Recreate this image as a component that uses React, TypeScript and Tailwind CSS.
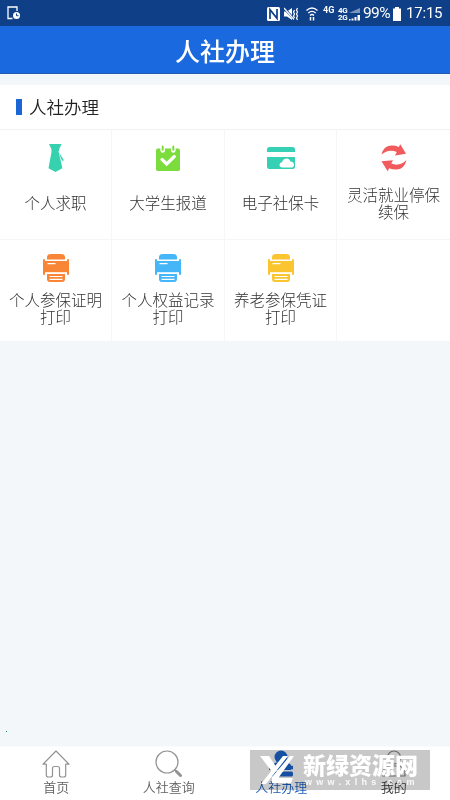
import type { ReactNode } from 'react';

function TieIcon() {
  return (
    <svg className="h-7 w-7" viewBox="0 0 28 28" fill="#36d1af">
      <path d="M7 0h12.500l-2.500 5.500.4 1.500H9.200l.4-1.500z" />
      <path d="M9.700 6.800h6.700l4 17.500-6.900 3.700-7-3.700z" />
      <path d="M17 8.600l4.600 7.200-.5 1.600-2-2.400z" />
    </svg>
  );
}

function CalendarIcon() {
  return (
    <svg className="h-7 w-7" viewBox="0 0 28 28">
      <rect x="2" y="4.6" width="24" height="22.4" rx="1.8" fill="#7bdc3c" />
      <path d="M8.7 3v3.500M19.3 3v3.500" stroke="#fff" strokeWidth="4.6" strokeLinecap="round" />
      <path d="M8.7 2.500v3.200M19.3 2.500v3.200" stroke="#7bdc3c" strokeWidth="2" strokeLinecap="round" />
      <path d="M8 15.500l4.700 4.500 7.600-7.500" fill="none" stroke="#fff" strokeWidth="3.2" strokeLinecap="round" />
    </svg>
  );
}

function CardIcon() {
  return (
    <svg className="h-7 w-7" viewBox="0 0 28 28">
      <path d="M2.500 3h23Q28 3 28 5.500V8H0V5.500Q0 3 2.500 3z" fill="#36d1b5" />
      <path d="M0 13h28v9.200Q28 25 25.500 25h-23Q0 25 0 22.200z" fill="#36d1b5" />
      <path d="M15.500 23.500q-3-.3-3-2.600 0-2.400 2.600-2.600.7-3.300 4-3.800 3.300-.2 4.300 3 3.600.4 3.600 3.200 0 2.800-3 2.800z" fill="#fff" />
    </svg>
  );
}

function RefreshIcon() {
  return (
    <svg className="h-7 w-7" viewBox="0 0 28 28" fill="#f15b5b">
      <path d="M1.500 10.500Q3.500 2.200 11 1.600q4.300-.2 7.800 1.400L20.300.2 26 9.800l-11 1.700 1.800-3.500Q8.500 4.500 1.500 10.500z" />
      <path d="M26.500 16q-2 8.800-9.500 9.600-4.300.2-7.800-1.400l-1.500 3.100L1.500 17.300l11.500-1-1.800 3.200q8.300 3.500 15.300-3.500z" />
    </svg>
  );
}

function PrinterIcon({ color }: { color: string }) {
  return (
    <svg className="h-7 w-7" viewBox="0 0 28 28">
      <path d="M5 5.400V3.500Q5 0 8.500 0h11Q23 0 23 3.500v1.900z" fill={color} />
      <rect x="1" y="5" width="2" height="16" rx="1" fill={color} />
      <rect x="25" y="5" width="2" height="16" rx="1" fill={color} />
      <path d="M1 7h26v11.200H1z" fill={color} />
      <path d="M5 19.900h18V25q0 3-3 3H8q-3 0-3-3z" fill={color} />
      <path d="M5.500 9.600h8M7.500 22.500h13M7.500 25.400h13" stroke="#fff" strokeWidth="1.200" />
    </svg>
  );
}

const services: { label: string[]; icon: ReactNode }[] = [
  { label: ['个人求职'], icon: <TieIcon /> },
  { label: ['大学生报道'], icon: <CalendarIcon /> },
  { label: ['电子社保卡'], icon: <CardIcon /> },
  { label: ['灵活就业停保', '续保'], icon: <RefreshIcon /> },
  { label: ['个人参保证明', '打印'], icon: <PrinterIcon color="#f98636" /> },
  { label: ['个人权益记录', '打印'], icon: <PrinterIcon color="#45b6f7" /> },
  { label: ['养老参保凭证', '打印'], icon: <PrinterIcon color="#fac52e" /> },
];

function StatusBar() {
  return (
    <div className="flex h-[26px] items-center bg-[#0f3f87] pr-[8px] pl-[7px] font-['Roboto'] text-white">
      <svg className="h-[14px] w-[14px]" viewBox="0 0 14 14" fill="none" stroke="#fff" strokeWidth="1.300">
        <path d="M5.500 12.500H1V1h9v4" />
        <circle cx="9.500" cy="9.500" r="3.500" fill="#fff" stroke="none" />
        <path d="M9.500 7.500v2.200h2" stroke="#0f3f87" strokeWidth="1" />
      </svg>
      <div className="ml-auto flex items-center pt-px">
        <svg className="h-[14px] w-[13px]" viewBox="0 0 13 14">
          <rect width="13" height="14" rx="1.500" fill="#fff" />
          <path d="M3 12V2.600l7 8.800V2" fill="none" stroke="#0f3f87" strokeWidth="1.700" />
        </svg>
        <svg className="ml-1 h-[14px] w-[15px]" viewBox="0 0 15 14" fill="none" stroke="#fff">
          <path d="M0 4.500h3L8 1v12L3 9.500H0z" fill="#fff" stroke="none" />
          <path d="M0 1l10 11" stroke="#0f3f87" strokeWidth="2.400" />
          <path d="M0 1l10 11.500" strokeWidth="1.200" />
          <path d="M10.500 3l-1 2 1 2-1 2 1 2M13.500 1l-1 2 1 2-1 2 1 2-1 2 1 2" strokeWidth="1.200" />
        </svg>
        <svg className="ml-[7px] h-[14px] w-[12px]" viewBox="0 0 12 14" fill="none" stroke="#fff" strokeWidth="1.300">
          <path d="M.5 3.500Q6-1.500 11.500 3.500M2.300 6q3.700-3.300 7.400 0M4 8.400q2-1.800 4 0" />
          <path d="M4.500 13.500V10M7.500 10v3.500" strokeWidth="1.500" />
        </svg>
        <span className="mb-[6px] ml-[5px] w-[12px] text-[9px] leading-none font-bold">4G</span>
        <div className="ml-[3px] flex w-[10px] flex-col text-[8px] leading-[7px] font-bold tracking-[-0.400px]">
          <span>4G</span>
          <span>2G</span>
        </div>
        <svg className="ml-px h-[14px] w-[11px]" viewBox="0 0 11 14" fill="#fff">
          <path d="M0 6L11 1v5z" opacity=".45" />
          <path d="M0 12h1.500v1.500H0zM2.500 11.500h2v2h-2zM5.500 10h2v3.500h-2zM8.500 8H11v5.500H8.500z" />
        </svg>
        <span className="ml-[3px] w-[27px] text-[15.500px] leading-none tracking-[-0.600px]">99%</span>
        <svg className="ml-[3px] h-[14px] w-[8px]" viewBox="0 0 8 14" fill="#fff">
          <path d="M2 0h4v1.500h2V14H0V1.500h2z" />
        </svg>
        <span className="ml-[5px] w-[36px] text-[15px] leading-none tracking-[-0.200px]">17:15</span>
      </div>
    </div>
  );
}

function TabBar() {
  return (
    <nav className="grid h-[54px] grid-cols-4 border-t border-[#f9fbfc] bg-white text-[13px] leading-[18px] font-[350] text-[#606060]">
      <div className="flex flex-col items-center pt-[3px]">
        <svg className="h-[28px] w-[28px]" viewBox="0 0 28 28" fill="none" stroke="#929292" strokeWidth="1.200" strokeLinejoin="round">
          <path d="M1 14.200L14 1l13 13.200h-3.300V25q0 2-2 2h-2.200q-2 0-2-2v-6.500q0-2-2-2h-3q-2 0-2 2V25q0 2-2 2H6.300q-2 0-2-2V14.200z" />
        </svg>
        <span>首页</span>
      </div>
      <div className="flex flex-col items-center pt-[3px]">
        <svg className="h-[28px] w-[28px]" viewBox="0 0 28 28" fill="none" stroke="#929292" strokeLinecap="round">
          <circle cx="12" cy="12" r="11" strokeWidth="1.200" />
          <path d="M19.800 19.800l2 2" strokeWidth="1.500" />
          <path d="M21.500 21.500l4 4" strokeWidth="3" />
        </svg>
        <span>人社查询</span>
      </div>
      <div className="flex flex-col items-center pt-[3px] text-[#1c5fc0]">
        <svg className="h-[28px] w-[28px]" viewBox="0 0 28 28" fill="#1c66d0">
          <circle cx="14" cy="7" r="6.500" />
          <path d="M2 20v-1.500Q4 12 14 12q8 0 10 3v5z" />
          <rect x="4" y="21.500" width="22" height="5" rx="1.500" />
          <path d="M13 15.800h13v3.500H13z" />
        </svg>
        <span>人社办理</span>
      </div>
      <div className="flex flex-col items-center pt-[3px] text-[#343434]">
        <svg className="h-[28px] w-[28px]" viewBox="0 0 28 28" fill="none" stroke="#888" strokeWidth="1.200">
          <circle cx="14" cy="7.500" r="6.500" />
          <path d="M3 26v-4q1-6 8-6h6q7 0 8 6v4z" />
        </svg>
        <span>我的</span>
      </div>
    </nav>
  );
}

function Watermark() {
  return (
    <>
      <div className="absolute top-[750px] left-[250px] h-[40px] w-[180px] bg-[#c8c8c8] mix-blend-multiply" />
      <div className="absolute top-[750px] left-[250px] flex h-[40px] w-[180px] text-white">
        <svg className="h-[40px] w-[46px] shrink-0" viewBox="0 0 46 40" fill="#fff">
          <path d="M10 6h9l8 12-4 5z" />
          <path d="M33 6h5L16 34h-5z" />
          <path d="M40 6h4L29 27v1h14l-2 5H22v-6z" />
        </svg>
        <div className="ml-[7px] flex flex-col">
          <span className="mt-[2px] text-[23px] leading-[25px] font-black whitespace-nowrap">新绿资源网</span>
          <span className="ml-[2px] font-['Liberation_Sans'] text-[9px] leading-[10px] font-bold tracking-[4.300px] whitespace-nowrap opacity-90">www.xlhs.com</span>
        </div>
      </div>
    </>
  );
}

export default function App() {
  return (
    <div className="relative flex h-[800px] w-[450px] flex-col overflow-hidden bg-[#f3f7fa] font-['Noto_Sans_CJK_SC',sans-serif]">
      <StatusBar />
      <header className="flex h-[48px] items-center justify-center border-b border-[#2559ad] bg-[#1b69df] pt-[2px] text-[25px] leading-none font-medium text-white">
        人社办理
      </header>

      <main className="mt-[11px] flex flex-1 flex-col">
        <section className="bg-white">
          <div className="flex h-[45px] items-center border-b border-[#f0f1f2] pl-4">
            <span className="h-4 w-[6px] bg-[#1b65d5]" />
            <h2 className="ml-[7px] text-[17.500px] leading-none font-[350] text-[#222]">人社办理</h2>
          </div>
          <div className="grid grid-cols-[112px_113px_112px_113px] grid-rows-[110px_101px]">
            {services.map(({ label, icon }, index) => (
              <div
                key={label.join('')}
                className={`flex flex-col items-center border-[#f5f6f8] pt-[14px] ${index < 4 ? 'border-b' : ''} ${index === 3 ? '' : 'border-r'}`}
              >
                {icon}
                <div
                  className={`text-center text-[15.500px] leading-[17px] font-light whitespace-nowrap text-[#333] ${
                    index >= 4 ? 'mt-[9px]' : label.length > 1 ? 'mt-[14px]' : 'mt-[22px]'
                  }`}
                >
                  {label.map((line) => (
                    <div key={line}>{line}</div>
                  ))}
                </div>
              </div>
            ))}
          </div>
        </section>
        <span className="mt-auto mb-[14px] ml-[6px] h-px w-px bg-[#168c96]" />
      </main>

      <TabBar />
      <Watermark />
    </div>
  );
}
